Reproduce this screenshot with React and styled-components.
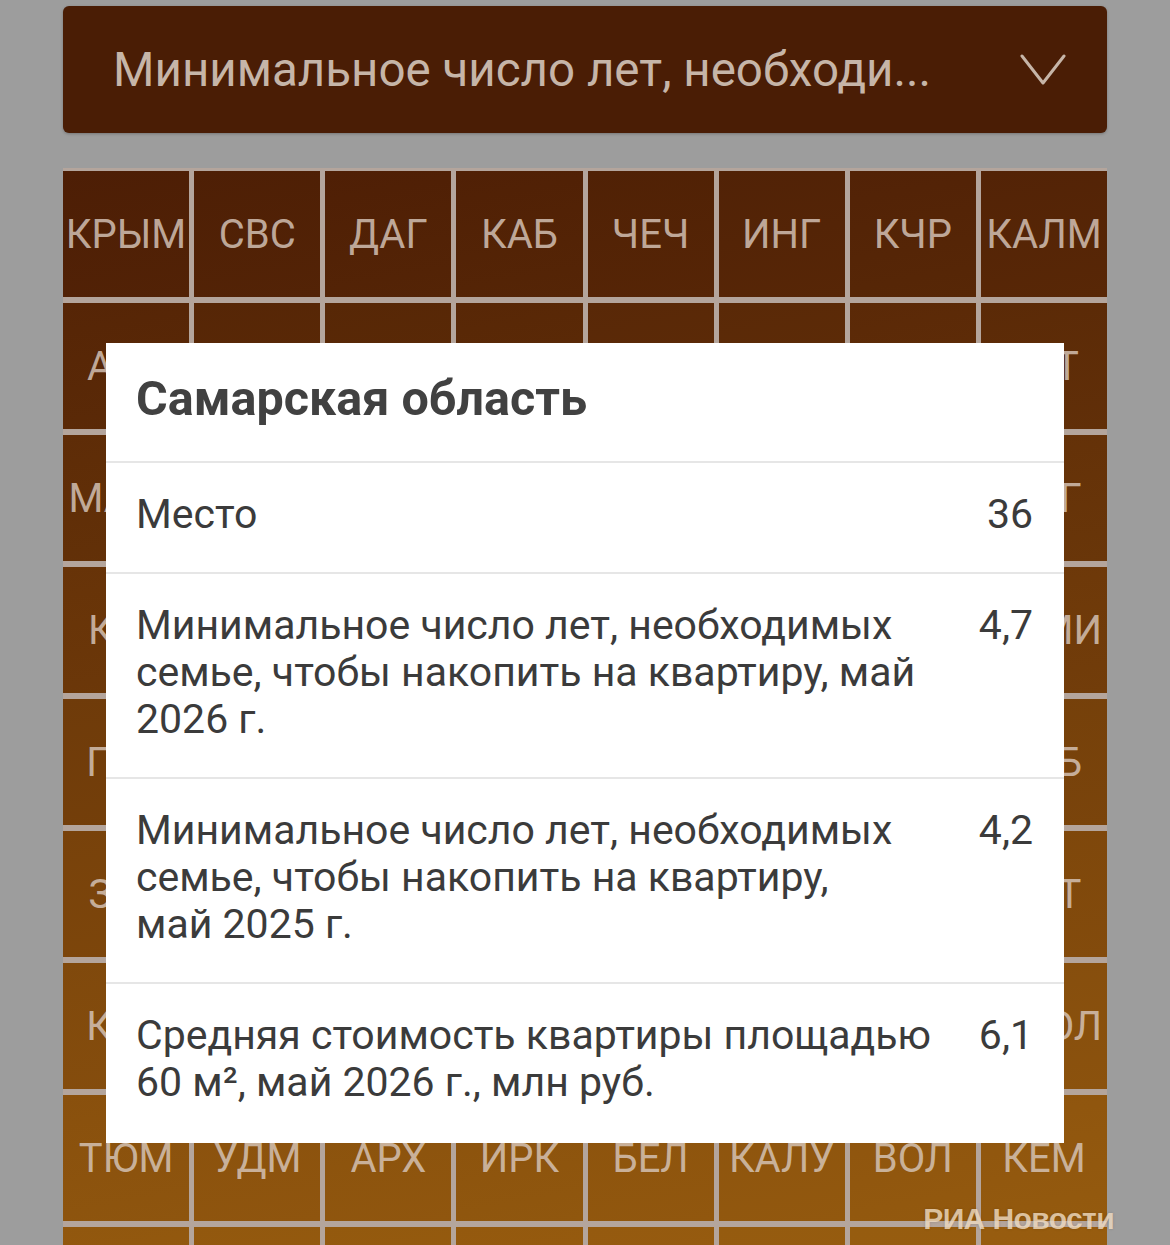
import React from 'react'
import styled, { createGlobalStyle } from 'styled-components'

const GlobalStyle = createGlobalStyle`
  html, body {
    margin: 0;
    padding: 0;
    background: #9d9d9d;
    overflow: hidden;
  }
  body {
    font-family: Roboto, "Noto Sans", "Liberation Sans", sans-serif;
  }
`

const regions = [
  ['КРЫМ', 'СВС', 'ДАГ', 'КАБ', 'ЧЕЧ', 'ИНГ', 'КЧР', 'КАЛМ'],
  ['АЛТ', 'МОСК', 'СПБ', 'ТЫВА', 'БУР', 'ЕВР', 'МО', 'ТАТ'],
  ['МАРИ', 'МУР', 'НЕН', 'ЛО', 'КАР', 'САХ', 'СЕВ', 'ВЛГ'],
  ['КУР', 'ЛИП', 'ОРЕН', 'ТУЛ', 'ВЛАД', 'ЧУВ', 'ЯРО', 'КОМИ'],
  ['ПЕН', 'САМ', 'ОМСК', 'БАШ', 'ТОМ', 'НОВГ', 'РОСТ', 'ХАБ'],
  ['ЗАБ', 'ИВАН', 'СТАВ', 'ПЕРМ', 'САР', 'КРАС', 'АМУР', 'ЯКТ'],
  ['КИР', 'ТВЕР', 'БРЯН', 'КАЛИН', 'РЯЗ', 'ПРИМ', 'НИЖ', 'СМОЛ'],
  ['ТЮМ', 'УДМ', 'АРХ', 'ИРК', 'БЕЛ', 'КАЛУ', 'ВОЛ', 'КЕМ'],
  ['ЧЕЛ', 'ОРЛ', 'МАГ', 'ПСК', 'КУРГ', 'КОСТ', 'СВЕР', 'НОВС'],
]

const details = [
  { label: 'Место', value: '36' },
  {
    label: 'Минимальное число лет, необходимых семье, чтобы накопить на квартиру, май 2026\u00a0г.',
    value: '4,7',
  },
  {
    label: 'Минимальное число лет, необходимых семье, чтобы накопить на квартиру, май\u00a02025\u00a0г.',
    value: '4,2',
  },
  {
    label: 'Средняя стоимость квартиры площадью 60 м², май 2026 г., млн руб.',
    value: '6,1',
  },
]

// dark brown -> amber, t in 0..1
const from = [77, 30, 5]
const to = [152, 93, 15]
const shade = (t) => {
  const c = from.map((v, i) => Math.round(v + (to[i] - v) * Math.min(1, Math.max(0, t))))
  return `rgb(${c[0]}, ${c[1]}, ${c[2]})`
}

const Page = styled.div`
  position: relative;
  height: 1245px;
  padding: 6px 63px 0;
  box-sizing: border-box;
  display: flex;
  flex-direction: column;
  gap: 38px;
`

const Select = styled.div`
  flex: none;
  height: 127px;
  border-radius: 6px;
  background: #4a1d05;
  box-shadow: 0 1px 3px rgba(0, 0, 0, 0.25);
  display: flex;
  align-items: center;
  justify-content: space-between;
  padding: 0 41px 0 50px;
  color: #c6b5a8;
  font-size: 47.5px;
`

const Chevron = styled.svg`
  width: 46px;
  height: 31px;
  flex: none;
`

const Grid = styled.div`
  flex: none;
  display: grid;
  grid-template-columns: repeat(8, 1fr);
  grid-auto-rows: 126px;
  column-gap: 5px;
  row-gap: 6px;
  background: #b4a59c;
  box-shadow: 0 -3px 0 #b4a59c;
`

const Tile = styled.div`
  display: flex;
  align-items: center;
  justify-content: center;
  background: linear-gradient(
    170deg,
    ${(p) => shade(p.$t)} 0%,
    ${(p) => shade(p.$t + 0.07)} 100%
  );
  color: rgba(215, 198, 186, 0.82);
  font-size: 40px;
  white-space: nowrap;
  overflow: hidden;
`

const Dialog = styled.div`
  position: absolute;
  left: 106px;
  top: 343px;
  width: 958px;
  height: 800px;
  background: #fff;
  display: flex;
  flex-direction: column;
  color: #3b3b3b;
`

const Title = styled.h2`
  margin: 0;
  padding: 28px 30px 34px;
  font-size: 48.5px;
  line-height: 56px;
  font-weight: 700;
  color: #414141;
  border-bottom: 2px solid #e6e6e6;
`

const Row = styled.div`
  display: grid;
  grid-template-columns: 1fr auto;
  column-gap: 40px;
  padding: 28px 31px 34px 30px;
  font-size: 41px;
  line-height: 47px;
  border-bottom: ${(p) => (p.$last ? 'none' : '2px solid #e6e6e6')};
`

const Value = styled.span`
  text-align: right;
`

const Watermark = styled.div`
  position: absolute;
  right: 56px;
  bottom: 9px;
  font-family: "Liberation Sans", Arial, sans-serif;
  font-size: 30px;
  font-weight: 700;
  letter-spacing: -0.6px;
  color: rgba(245, 225, 200, 0.78);
  text-shadow: 0 0 3px rgba(0, 0, 0, 0.15);
`

export default function App() {
  const rows = regions.length
  return (
    <>
      <GlobalStyle />
      <Page>
        <Select>
          <span>Минимальное число лет, необходи...</span>
          <Chevron viewBox="0 0 46 31" fill="none">
            <polyline
              points="2,2 23,29 44,2"
              stroke="#c6b5a8"
              strokeWidth="3"
              strokeLinecap="round"
              strokeLinejoin="round"
            />
          </Chevron>
        </Select>
        <Grid>
          {regions.map((row, r) =>
            row.map((code, c) => (
              <Tile key={code + r + c} $t={(r + c * 0.1) / (rows - 0.2)}>
                {code}
              </Tile>
            ))
          )}
        </Grid>
        <Dialog>
          <Title>Самарская область</Title>
          {details.map((d, i) => (
            <Row key={i} $last={i === details.length - 1}>
              <span>{d.label}</span>
              <Value>{d.value}</Value>
            </Row>
          ))}
        </Dialog>
        <Watermark>РИА Новости</Watermark>
      </Page>
    </>
  )
}
